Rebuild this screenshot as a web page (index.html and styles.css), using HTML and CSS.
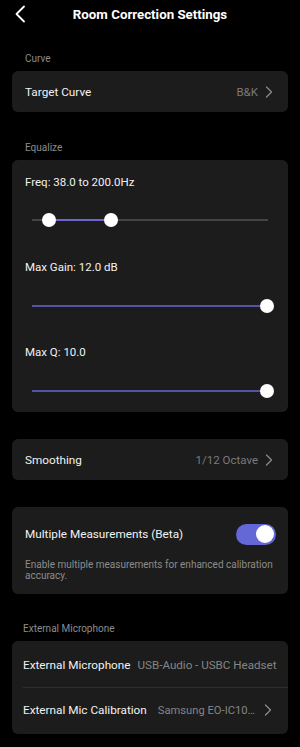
FILE: index.html
```html
<!DOCTYPE html>
<html>
<head>
<meta charset="utf-8">
<link rel="stylesheet" href="styles.css">
</head>
<body>
<div class="page">
  <header class="topbar">
    <svg class="back" width="12" height="18" viewBox="0 0 12 18"><path d="M10 1.5 L2.5 9 L10 16.5" fill="none" stroke="#fff" stroke-width="1.8" stroke-linecap="round" stroke-linejoin="round"/></svg>
    <h1 class="title">Room Correction Settings</h1>
  </header>

  <div class="section-label first">Curve</div>
  <div class="card">
    <div class="row">
      <span class="row-title">Target Curve</span>
      <span class="row-value">B&amp;K</span>
      <svg class="chev" width="8" height="12" viewBox="0 0 8 12"><path d="M1.5 1 L6.5 6 L1.5 11" fill="none" stroke="#8a8a8a" stroke-width="1.3" stroke-linecap="round" stroke-linejoin="round"/></svg>
    </div>
  </div>

  <div class="section-label eq-title">Equalize</div>
  <div class="card eq">
    <div class="eq-label">Freq: 38.0 to 200.0Hz</div>
    <div class="slider s1">
      <div class="track"></div>
      <div class="fill" style="left:17px;width:62px"></div>
      <div class="thumb" style="left:17px"></div>
      <div class="thumb" style="left:79px"></div>
    </div>
    <div class="eq-label">Max Gain: 12.0 dB</div>
    <div class="slider">
      <div class="track"></div>
      <div class="fill dark" style="left:0;width:235px"></div>
      <div class="thumb" style="left:235px"></div>
    </div>
    <div class="eq-label">Max Q: 10.0</div>
    <div class="slider">
      <div class="track"></div>
      <div class="fill dark" style="left:0;width:235px"></div>
      <div class="thumb" style="left:235px"></div>
    </div>
  </div>

  <div class="card smoothing">
    <div class="row">
      <span class="row-title">Smoothing</span>
      <span class="row-value">1/12 Octave</span>
      <svg class="chev" width="8" height="12" viewBox="0 0 8 12"><path d="M1.5 1 L6.5 6 L1.5 11" fill="none" stroke="#8a8a8a" stroke-width="1.3" stroke-linecap="round" stroke-linejoin="round"/></svg>
    </div>
  </div>

  <div class="card multi">
    <div class="multi-head">
      <span class="row-title">Multiple Measurements (Beta)</span>
      <span class="toggle"><span class="knob"></span></span>
    </div>
    <div class="desc">Enable multiple measurements for enhanced calibration accuracy.</div>
  </div>

  <div class="section-label ext">External Microphone</div>
  <div class="card mic">
    <div class="row mic-row">
      <span class="row-title">External Microphone</span>
      <span class="row-value mic-value">USB-Audio - USBC Headset</span>
    </div>
    <div class="divider"></div>
    <div class="row mic-row">
      <span class="row-title">External Mic Calibration</span>
      <span class="row-value mic-value cal">Samsung EO-IC10…</span>
      <svg class="chev" width="8" height="12" viewBox="0 0 8 12"><path d="M1.5 1 L6.5 6 L1.5 11" fill="none" stroke="#8a8a8a" stroke-width="1.3" stroke-linecap="round" stroke-linejoin="round"/></svg>
    </div>
  </div>
</div>
</body>
</html>
```

FILE: styles.css
```css
html, body {
  margin: 0;
  padding: 0;
  background: #000;
}
body {
  font-family: Roboto, "Noto Sans", sans-serif;
  color: #f2f2f2;
  width: 300px;
  overflow: hidden;
}
.page {
  padding: 0 12px;
}
.topbar {
  height: 28px;
  display: flex;
  align-items: center;
  justify-content: center;
  position: relative;
}
.back {
  position: absolute;
  left: 2px;
  top: 5px;
}
.title {
  margin: 0;
  font-size: 13.3px;
  font-weight: 700;
  color: #fff;
}
.section-label {
  font-size: 10px;
  color: #8c8c8c;
  padding: 0 13px;
  height: 15px;
  line-height: 15px;
  margin-top: 23px;
  margin-bottom: 5px;
}
.section-label.eq-title {
  margin-top: 28px;
}
.section-label.ext {
  margin-top: 26.5px;
  margin-bottom: 5.5px;
  padding-left: 11px;
}
.card {
  background: #1c1c1c;
  border-radius: 6px;
}
.row {
  height: 41px;
  display: flex;
  align-items: center;
  padding: 0 13px;
}
.row-title {
  font-size: 11.75px;
  color: #f2f2f2;
  flex: 0 0 auto;
  white-space: nowrap;
}
.row-value {
  margin-left: auto;
  font-size: 11.5px;
  color: #7a7a7a;
  white-space: nowrap;
}
.chev {
  margin-left: 7px;
  margin-right: 2px;
  flex: 0 0 auto;
}
.eq {
  padding: 14px 0 13px 0;
}
.eq-label {
  font-size: 11.5px;
  padding: 0 13px;
  height: 16px;
  line-height: 16px;
}
.slider {
  position: relative;
  height: 16px;
  margin: 23px 20px 30px 20px;
}
.slider.s1 {
  margin-top: 22px;
  margin-bottom: 31px;
}
.slider:last-child {
  margin-bottom: 0;
}
.track {
  position: absolute;
  left: 0;
  right: 0;
  top: 7px;
  height: 2px;
  background: #444;
}
.fill {
  position: absolute;
  top: 7px;
  height: 2px;
  background: #6a66cc;
}
.fill.dark {
  background: #5055a8;
}
.thumb {
  position: absolute;
  top: 1px;
  width: 14px;
  height: 14px;
  margin-left: -7px;
  border-radius: 50%;
  background: #fff;
}
.smoothing {
  margin-top: 27px;
}
.multi {
  margin-top: 27px;
  padding: 18px 13px 13.5px 13px;
}
.multi-head {
  display: flex;
  align-items: center;
  justify-content: space-between;
  height: 18px;
}
.toggle {
  width: 40px;
  height: 21px;
  border-radius: 11px;
  background: #6467d6;
  position: relative;
  margin-right: -1px;
}
.knob {
  position: absolute;
  right: 2px;
  top: 1.5px;
  width: 18px;
  height: 18px;
  border-radius: 50%;
  background: #fff;
}
.desc {
  font-size: 10px;
  color: #8c8c8c;
  line-height: 11px;
  margin-top: 15.5px;
}
.mic {
  padding: 2px 0;
}
.mic-row {
  height: 44px;
  padding-left: 11px;
  padding-right: 10px;
}
.mic-value {
  font-size: 11.6px;
  color: #858585;
  margin-left: 7px;
}
.mic-value.cal {
  font-size: 11.2px;
  margin-left: 11px;
  margin-right: 0;
}
.mic-row .chev {
  margin-right: 4px;
  margin-left: 9px;
}
.divider {
  height: 1px;
  background: #2e2e2e;
  margin-left: 11px;
}
```
